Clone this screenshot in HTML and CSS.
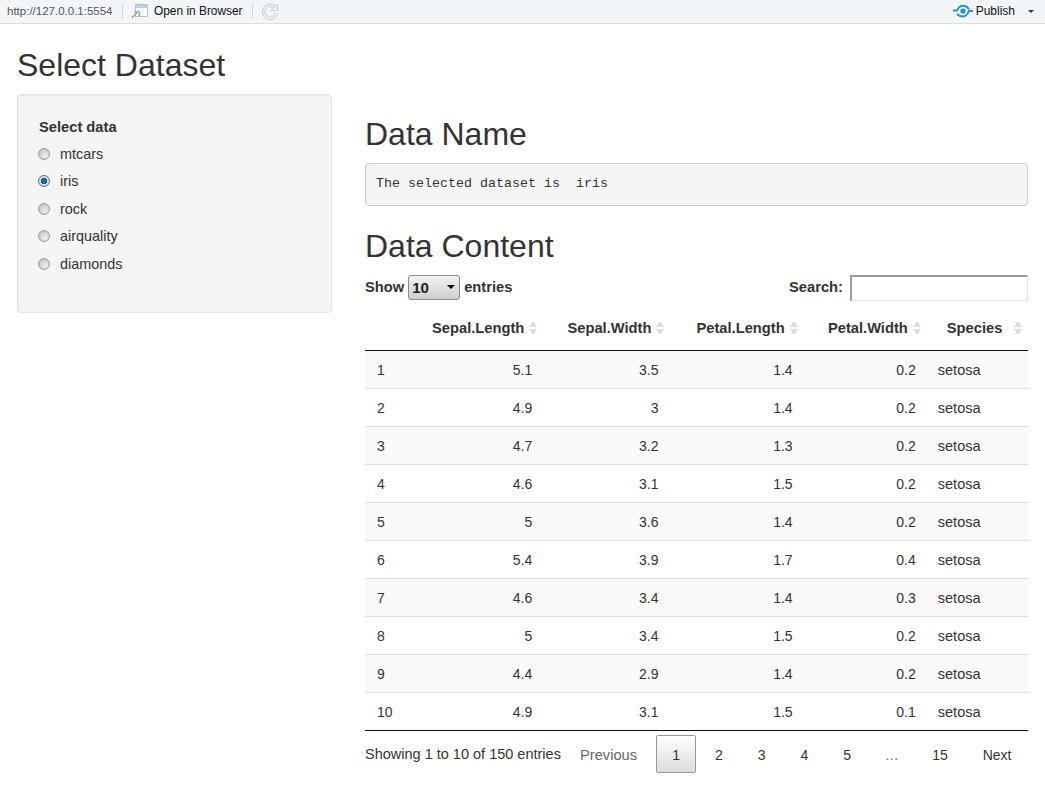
FILE: index.html
```html
<!DOCTYPE html>
<html lang="en">
<head>
    <meta charset="UTF-8">
    <meta name="viewport" content="width=device-width, initial-scale=1.0">
    <title>Select Dataset</title>
    <link rel="stylesheet" href="styles.css">
</head>
<body>
    <div class="toolbar">
        <span class="url">http://127.0.0.1:5554</span>
        <span class="sep"></span>
        <svg class="open-icon" width="18" height="16" viewBox="0 0 18 16">
            <rect x="4.5" y="1.5" width="12" height="12" fill="#fbfcfd" stroke="#b9c0c8"/>
            <rect x="5" y="2" width="11" height="3" fill="#b5d3f0"/>
            <path d="M1 14.5l6-5.5M3.5 8.5h5v5" fill="none" stroke="#8f979f" stroke-width="1.6" stroke-dasharray="2 .6"/>
        </svg>
        <span class="tool-label open-label">Open in Browser</span>
        <span class="sep"></span>
        <svg class="reload-icon" width="17" height="18" viewBox="0 0 17 18">
            <path d="M13 5.5A6.5 6.5 0 1 0 14.5 11" fill="none" stroke="#c5ccd8" stroke-width="3.4"/>
            <path d="M13 5.5A6.5 6.5 0 1 0 14.5 11" fill="none" stroke="#f3f6f8" stroke-width="1.4"/>
            <path d="M15.5 2v6.5H9z" fill="#f3f6f8" stroke="#c5ccd8"/>
        </svg>
        <span class="publish">
            <svg width="20" height="14" viewBox="0 0 20 14">
                <path d="M0 6.5H4C5.5 3.5 8 1.8 10 1.8C12.5 1.8 14.5 3 16 5.5M20 7H16C14.5 10.5 12.5 12.5 10 12.5C8 12.5 5.5 11.5 4 10" fill="none" stroke="#1c94dc" stroke-width="1.9"/>
                <circle cx="10" cy="7" r="2.6" fill="#1c94dc"/>
            </svg>
            <span class="tool-label">Publish</span>
            <span class="caret"></span>
        </span>
    </div>

    <div class="page">
        <h1 class="title">Select Dataset</h1>
        <div class="layout">
            <form class="well">
                <div class="well-label">Select data</div>
                <label class="radio"><input type="radio" name="data"><span>mtcars</span></label>
                <label class="radio"><input type="radio" name="data" checked><span>iris</span></label>
                <label class="radio"><input type="radio" name="data"><span>rock</span></label>
                <label class="radio"><input type="radio" name="data"><span>airquality</span></label>
                <label class="radio"><input type="radio" name="data"><span>diamonds</span></label>
            </form>

            <div class="main">
                <h2 class="heading">Data Name</h2>
                <pre class="output">The selected dataset is  iris</pre>
                <h2 class="heading">Data Content</h2>

                <div class="dt-top">
                    <label class="dt-length">Show
                        <span class="select-wrap">
                            <select><option>10</option><option>25</option><option>50</option></select>
                        </span>
                        entries</label>
                    <label class="dt-search">Search: <input type="text"></label>
                </div>

                <table class="dt">
                    <colgroup>
                        <col class="col-id"><col class="col-sl"><col class="col-sw"><col class="col-pl"><col class="col-pw"><col class="col-sp">
                    </colgroup>
                    <thead>
                        <tr>
                            <th></th>
                            <th><div class="th-inner">Sepal.Length<i class="sort"></i></div></th>
                            <th><div class="th-inner th-sw">Sepal.Width<i class="sort"></i></div></th>
                            <th><div class="th-inner">Petal.Length<i class="sort"></i></div></th>
                            <th><div class="th-inner">Petal.Width<i class="sort"></i></div></th>
                            <th><div class="th-inner th-left">Species<i class="sort"></i></div></th>
                        </tr>
                    </thead>
                    <tbody>
                        <tr><td>1</td><td class="num">5.1</td><td class="num">3.5</td><td class="num">1.4</td><td class="num">0.2</td><td class="txt">setosa</td></tr>
                        <tr><td>2</td><td class="num">4.9</td><td class="num">3</td><td class="num">1.4</td><td class="num">0.2</td><td class="txt">setosa</td></tr>
                        <tr><td>3</td><td class="num">4.7</td><td class="num">3.2</td><td class="num">1.3</td><td class="num">0.2</td><td class="txt">setosa</td></tr>
                        <tr><td>4</td><td class="num">4.6</td><td class="num">3.1</td><td class="num">1.5</td><td class="num">0.2</td><td class="txt">setosa</td></tr>
                        <tr><td>5</td><td class="num">5</td><td class="num">3.6</td><td class="num">1.4</td><td class="num">0.2</td><td class="txt">setosa</td></tr>
                        <tr><td>6</td><td class="num">5.4</td><td class="num">3.9</td><td class="num">1.7</td><td class="num">0.4</td><td class="txt">setosa</td></tr>
                        <tr><td>7</td><td class="num">4.6</td><td class="num">3.4</td><td class="num">1.4</td><td class="num">0.3</td><td class="txt">setosa</td></tr>
                        <tr><td>8</td><td class="num">5</td><td class="num">3.4</td><td class="num">1.5</td><td class="num">0.2</td><td class="txt">setosa</td></tr>
                        <tr><td>9</td><td class="num">4.4</td><td class="num">2.9</td><td class="num">1.4</td><td class="num">0.2</td><td class="txt">setosa</td></tr>
                        <tr><td>10</td><td class="num">4.9</td><td class="num">3.1</td><td class="num">1.5</td><td class="num">0.1</td><td class="txt">setosa</td></tr>
                    </tbody>
                </table>

                <div class="dt-bottom">
                    <div class="dt-info">Showing 1 to 10 of 150 entries</div>
                    <div class="pager">
                        <a class="page-btn disabled">Previous</a>
                        <a class="page-btn current">1</a>
                        <a class="page-btn">2</a>
                        <a class="page-btn">3</a>
                        <a class="page-btn">4</a>
                        <a class="page-btn">5</a>
                        <span class="page-btn ellipsis">…</span>
                        <a class="page-btn">15</a>
                        <a class="page-btn">Next</a>
                    </div>
                </div>
            </div>
        </div>
    </div>
</body>
</html>
```

FILE: styles.css
```css
* {
    box-sizing: border-box;
}
body {
    margin: 0;
    background-color: #fff;
    color: #333;
    font-family: "Liberation Sans", Arial, sans-serif;
    font-size: 14px;
    line-height: 20px;
}

/* viewer toolbar */
.toolbar {
    display: flex;
    align-items: center;
    height: 24px;
    padding: 0 11px 1px 7px;
    background-color: #f3f6f8;
    border-bottom: 1px solid #dcdfe2;
    font-size: 12px;
}
.url {
    color: #555;
    width: 107px;
    font-size: 11.5px;
    white-space: nowrap;
}
.sep {
    width: 1px;
    height: 15px;
    background-color: #d3d7db;
    margin: 0 8px;
}
.open-icon {
    margin-right: 5px;
}
.tool-label {
    color: #111;
    white-space: nowrap;
}
.open-label {
    margin-right: 1px;
    font-size: 11.9px;
}
.reload-icon {
    margin-left: 1px;
}
.publish {
    display: flex;
    align-items: center;
    margin-left: auto;
}
.publish svg {
    margin-right: 3px;
}
.caret {
    width: 0;
    height: 0;
    margin-left: 13px;
    border-left: 3px solid transparent;
    border-right: 3px solid transparent;
    border-top: 3px solid #333;
}

/* page */
.page {
    padding: 0 17px;
}
.title {
    margin: 21px 0 9px;
    font-size: 32px;
    font-weight: 400;
    line-height: 40px;
}
.layout {
    display: flex;
    gap: 33px;
    align-items: flex-start;
}
.well {
    width: 315px;
    height: 219px;
    padding: 22px 21px;
    background-color: #f5f5f5;
    border: 1px solid #e3e3e3;
    border-radius: 4px;
    box-shadow: inset 0 1px 1px rgba(0, 0, 0, 0.05);
}
.well-label {
    font-size: 14.7px;
    font-weight: 700;
    margin-bottom: 3px;
}
.radio {
    display: flex;
    align-items: center;
    gap: 10px;
    height: 27.5px;
    font-size: 14.4px;
}
.radio input {
    appearance: none;
    width: 12px;
    height: 12px;
    margin: 0 0 0 -1px;
    border: 1px solid #9c9c9c;
    border-radius: 50%;
    background: radial-gradient(circle at 65% 70%, #f0f0f0, #c4c4c4 80%);
}
.radio input:checked {
    border-color: #62686d;
    background: radial-gradient(circle, #1080c4 0, #0a5f96 3px, #dfe4e8 3.6px);
}

.main {
    flex: 1;
    padding-top: 20px;
}
.heading {
    margin: 0 0 9px;
    font-size: 32px;
    font-weight: 400;
    line-height: 40px;
}
.output {
    height: 43px;
    margin: 0 0 20px;
    padding: 11px 10px;
    background-color: #f5f5f5;
    border: 1px solid #ccc;
    border-radius: 4px;
    color: #333;
    font-family: "Liberation Mono", monospace;
    font-size: 13.33px;
    line-height: 18px;
}

/* datatable controls */
.dt-top {
    display: flex;
    justify-content: space-between;
    align-items: center;
    font-size: 14.7px;
    font-weight: 700;
    height: 26px;
}
.dt-length {
    display: flex;
    align-items: center;
    gap: 4px;
    margin-top: -2px;
}
.select-wrap {
    position: relative;
    display: block;
    width: 52px;
    height: 25px;
}
.select-wrap::after {
    content: "";
    position: absolute;
    right: 5px;
    top: 10px;
    border-left: 4px solid transparent;
    border-right: 4px solid transparent;
    border-top: 4px solid #000;
}
.select-wrap select {
    appearance: none;
    width: 100%;
    height: 100%;
    padding: 0 3px;
    background: linear-gradient(#f2f2f2, #cfcfcf);
    border: 1px solid #8c8c8c;
    border-radius: 3px;
    color: #222;
    font-family: inherit;
    font-size: 15px;
    font-weight: 700;
}
.dt-search input {
    width: 178px;
    height: 26px;
    margin-left: 3px;
    border-width: 2px 1px 1px 2px;
    border-style: solid;
    border-color: #9a9a9a #e3e3e3 #e3e3e3 #9a9a9a;
    background-color: #fff;
    vertical-align: middle;
}

/* table */
.dt {
    width: 100%;
    margin-top: 8px;
    table-layout: fixed;
    border-collapse: collapse;
}
.col-id { width: 56px; }
.col-sl { width: 122px; }
.col-sw { width: 126px; }
.col-pl { width: 134px; }
.col-pw { width: 123px; }
.col-sp { width: 101px; }
.dt th {
    height: 41px;
    padding: 0 0 2px;
    border-bottom: 1px solid #111;
    font-size: 14.7px;
    font-weight: 700;
}
.th-inner {
    display: flex;
    justify-content: flex-end;
    align-items: center;
    gap: 5px;
    padding-right: 6px;
}
.th-sw {
    padding-right: 5px;
}
.th-left {
    justify-content: space-between;
    padding-left: 20px;
}
.sort {
    display: block;
    width: 8px;
    height: 14px;
    background:
        linear-gradient(to top left, #dcdcdc 50%, transparent 50%) 0 0 / 4px 6px no-repeat,
        linear-gradient(to top right, #dcdcdc 50%, transparent 50%) 4px 0 / 4px 6px no-repeat,
        linear-gradient(to bottom left, #dcdcdc 50%, transparent 50%) 0 8px / 4px 6px no-repeat,
        linear-gradient(to bottom right, #dcdcdc 50%, transparent 50%) 4px 8px / 4px 6px no-repeat;
}
.dt td {
    height: 38px;
    padding: 1px 11px 0;
    border-bottom: 1px solid #ddd;
}
.dt td:first-child {
    padding-left: 12px;
}
.dt tbody tr:nth-child(odd) {
    background-color: #f9f9f9;
}
.dt tbody tr:last-child td {
    border-bottom: 1px solid #111;
}
.dt td.num {
    text-align: right;
}
.dt td.txt {
    font-size: 14.5px;
}

/* info + paging */
.dt-bottom {
    display: flex;
    justify-content: space-between;
    align-items: flex-start;
    padding-top: 4px;
}
.dt-info {
    padding-top: 9px;
    font-size: 14.5px;
}
.pager {
    display: flex;
    gap: 2px;
}
.page-btn {
    padding: 9px 15.5px 8px;
    border: 1px solid transparent;
    border-radius: 2px;
    height: 38px;
}
.page-btn.disabled {
    color: #666;
    font-size: 14.7px;
}
.page-btn.current {
    border-color: #979797;
    background: linear-gradient(#fff, #dcdcdc);
}
.page-btn.ellipsis {
    padding: 9px 14px 8px;
    color: #666;
}
```
